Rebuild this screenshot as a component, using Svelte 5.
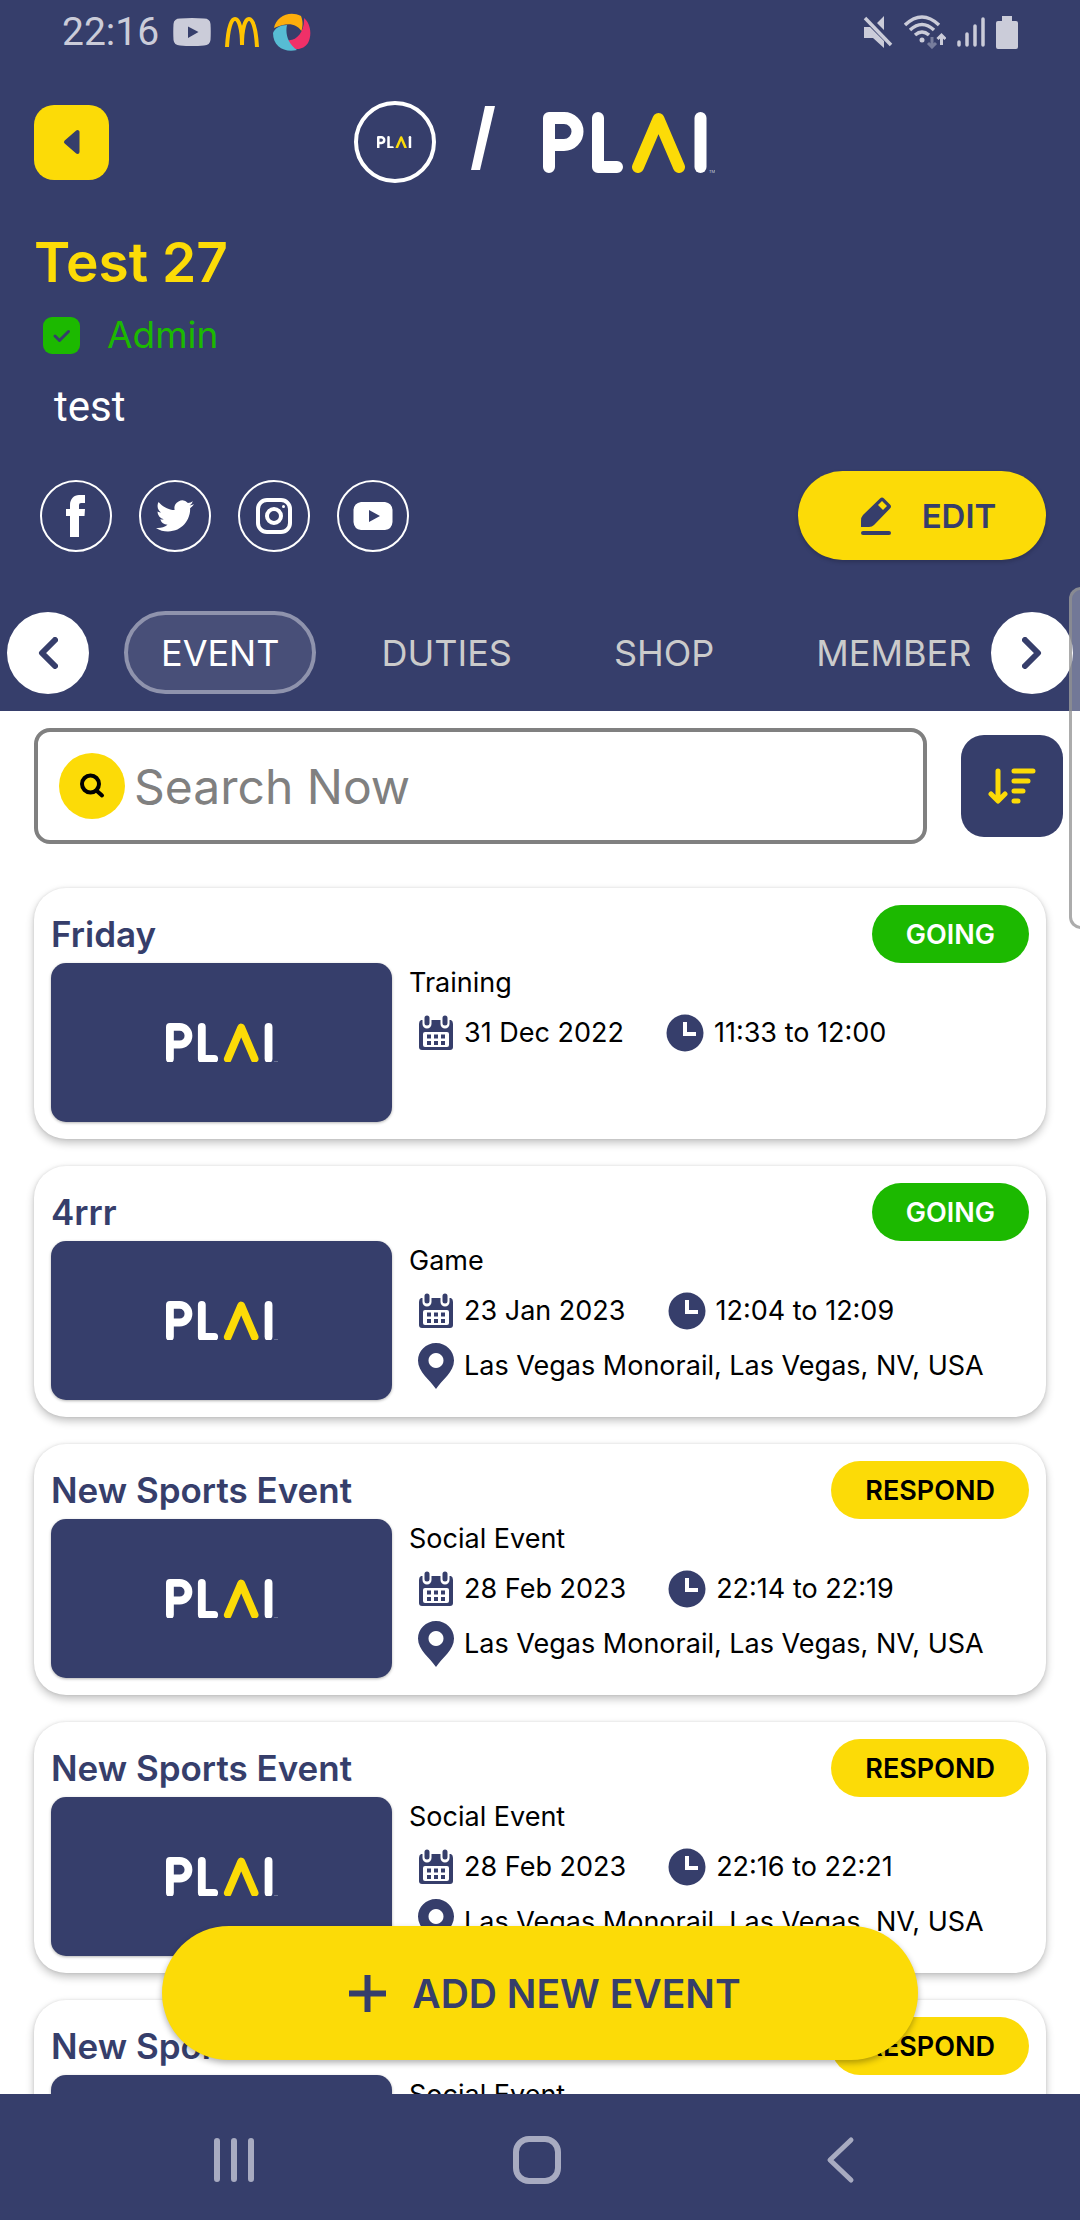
<script>
  const place = 'Las Vegas Monorail, Las Vegas, NV, USA';
  const events = [
    { title: 'Friday', kind: 'Training', date: '31 Dec 2022', time: '11:33 to 12:00', place: '', status: 'GOING' },
    { title: '4rrr', kind: 'Game', date: '23 Jan 2023', time: '12:04 to 12:09', place, status: 'GOING' },
    { title: 'New Sports Event', kind: 'Social Event', date: '28 Feb 2023', time: '22:14 to 22:19', place, status: 'RESPOND' },
    { title: 'New Sports Event', kind: 'Social Event', date: '28 Feb 2023', time: '22:16 to 22:21', place, status: 'RESPOND' },
    { title: 'New Sports Event', kind: 'Social Event', date: '28 Feb 2023', time: '22:16 to 22:21', place, status: 'RESPOND' }
  ];
  const tabs = ['EVENT', 'DUTIES', 'SHOP', 'MEMBERS'];
  let active = $state('EVENT');
  let query = $state('');
</script>

{#snippet logo()}
  <svg viewBox="0 0 172 61" role="img" aria-label="PLAI" fill="none" stroke="#fff" stroke-width="12" stroke-linecap="round" stroke-linejoin="round">
    <path d="M6 55V6H21a13.5 13.5 0 0 1 0 27H6" />
    <path d="M55 6V55H74" />
    <path d="M95 55 115.5 7 136 55" stroke="#fcdb07" />
    <path d="M157.500 6V55" />
    <text x="166" y="61" font-size="4" fill="#c9cbd9" stroke="none">TM</text>
  </svg>
{/snippet}

<div class="screen">
  <header>
    <div class="status">
      <div class="notices">
        <span class="clock">22:16</span>
        <svg width="38" height="28" viewBox="0 0 38 28"><path fill="#cbccd9" fill-rule="evenodd" d="M7 .5Q19-.5 31 .5Q37 .5 37.500 6Q38 14 37.500 22Q37 27 31 27.500Q19 28.500 7 27.500Q1 27 .5 22Q0 14 .5 6Q1 .5 7 .5ZM15 8.500V20L25.500 14Z" /></svg>
        <svg width="34" height="30" viewBox="0 0 34 30" fill="none" stroke="#ffc300" stroke-width="4"><path d="M2 30C3 12 6 2 10 2s7 10 7 26M17 28C17 12 20 2 24 2s7 10 8 28" /></svg>
        <svg width="38" height="38" viewBox="0 0 38 38">
          <path fill="#fdae0c" d="M1 15C3 3 17-3 28 3c2 5 2 10 .5 15C23 10 14 9 1 15Z" />
          <path fill="#f03068" d="M31 5c7 6 8 17 4 25-5 8-18 9-21-3 9 2 18-8 17-22Z" />
          <path fill="#57bcd4" d="M0 20c2-5 7-8 14-8-2 9 1 19 10 25C12 40 0 34 0 20Z" />
        </svg>
      </div>
      <div class="signals">
        <svg width="30" height="32" viewBox="0 0 30 32" fill="#cbccd9"><path d="M1 11H7L21 25V32L10 22H1ZM21 0V14L14 7Z" /><path d="M2 2 28 29" stroke="#cbccd9" stroke-width="3.500" /></svg>
        <svg width="42" height="34" viewBox="0 0 42 34" fill="none" stroke="#cbccd9" stroke-width="3.500">
          <path d="M1 10Q18-6 35 10M6 15Q18 4 30 15M11 20Q18 14 25 20" /><circle cx="18" cy="25" r="2.500" fill="#cbccd9" stroke="none" />
          <path d="M28 22V32M24 28 28 32 32 28" stroke="#777d9c" stroke-width="3" /><path d="M37.500 30V20M33.500 24 37.500 20 41.500 24" stroke-width="3" />
        </svg>
        <svg width="28" height="32" viewBox="0 0 28 32" fill="none" stroke="#cbccd9" stroke-width="3.500" stroke-linecap="round"><path d="M2 26V29M10 18V29M18 10V29M26 3V29" /></svg>
        <svg width="22" height="34" viewBox="0 0 22 34" fill="#cbccd9"><path d="M6 1H16V6H20Q22 6 22 8V32Q22 34 20 34H2Q0 34 0 32V8Q0 6 2 6H6Z" /></svg>
      </div>
    </div>

    <div class="topbar">
      <button class="back" aria-label="Back"><svg width="18" height="26" viewBox="0 0 18 26"><path d="M3 13 14.500 3V23Z" fill="#363e6b" stroke="#363e6b" stroke-width="4" stroke-linejoin="round" /></svg></button>
      <div class="brand">
        <span class="avatar">{@render logo()}</span>
        <svg class="slash" width="24" height="64" viewBox="0 0 24 64"><path d="M14 0H24L9 64H0Z" fill="#fff" /></svg>
        <span class="wordmark">{@render logo()}</span>
      </div>
    </div>

    <h1>Test 27</h1>
    <div class="role">
      <svg width="37" height="37" viewBox="0 0 37 37"><rect width="37" height="37" rx="9" fill="#1cb900" /><path d="m12 19 4.500 4.500 9-9" fill="none" stroke="#363e6b" stroke-width="3" stroke-linecap="round" stroke-linejoin="round" /></svg>
      <span>Admin</span>
    </div>
    <p class="about">test</p>

    <div class="actions">
      <a href="#facebook" aria-label="Facebook"><svg width="20" height="42" viewBox="0 0 20 42"><path fill="#fff" d="M4 42V21H0V14H4V10C4 4 8 0 13 0H19V8H15Q13 8 13 10V14H19L18.500 21H13V42Z" /></svg></a>
      <a href="#twitter" aria-label="Twitter"><svg width="38" height="38" viewBox="0 0 24 24"><path fill="#fff" d="M23.953 4.570a10 10 0 01-2.825.775 4.958 4.958 0 002.163-2.723c-.951.555-2.005.959-3.127 1.184a4.920 4.920 0 00-8.384 4.482C7.690 8.095 4.067 6.130 1.640 3.162a4.822 4.822 0 00-.666 2.475c0 1.710.870 3.213 2.188 4.096a4.904 4.904 0 01-2.228-.616v.060a4.923 4.923 0 003.946 4.827 4.996 4.996 0 01-2.212.085 4.936 4.936 0 004.604 3.417 9.867 9.867 0 01-6.102 2.105c-.390 0-.779-.023-1.170-.067a13.995 13.995 0 007.557 2.209c9.053 0 13.998-7.496 13.998-13.985 0-.210 0-.420-.015-.630A9.935 9.935 0 0024 4.590z" /></svg></a>
      <a href="#instagram" aria-label="Instagram"><svg width="36" height="36" viewBox="0 0 36 36" fill="none" stroke="#fff"><rect x="2" y="2" width="32" height="32" rx="9" stroke-width="4" /><circle cx="18" cy="18" r="7" stroke-width="4" /><circle cx="27.500" cy="8.500" r="1.500" fill="#fff" stroke="none" /></svg></a>
      <a href="#youtube" aria-label="YouTube"><svg width="40" height="28" viewBox="0 0 40 28"><path fill="#fff" fill-rule="evenodd" d="M8 0H32Q39 1 39.500 8V20Q39 27 32 28H8Q1 27 .5 20V8Q1 1 8 0ZM16 8V20L27 14Z" /></svg></a>
      <span class="grow"></span>
      <button class="edit">
        <svg width="32" height="38" viewBox="0 0 32 38" fill="#363e6b"><path fill-rule="evenodd" d="M20 1.500Q22-.5 24 1.500L30 7.500Q32 9.500 30 11.500L14 28Q12 30 9 30H1V24Q1 20 3 18ZM22 4 18 8 23 13 27 9Z" /><rect x="1" y="34" width="30" height="4" rx="2" /></svg>
        <span>EDIT</span>
      </button>
    </div>

    <nav class="tabs">
      <button class="round" aria-label="Previous tabs"><svg width="20" height="32" viewBox="0 0 20 32"><path d="M17 3 4 16 17 29" /></svg></button>
      <div class="track">
        {#each tabs as tab}
          <button class="tab" class:active={active === tab} onclick={() => (active = tab)}>{tab}</button>
        {/each}
      </div>
      <button class="round" aria-label="More tabs"><svg width="20" height="32" viewBox="0 0 20 32"><path d="M3 3 16 16 3 29" /></svg></button>
    </nav>
  </header>

  <main>
    <div class="searchrow">
      <label class="search">
        <span class="lens"><svg width="26" height="26" viewBox="0 0 26 26" fill="none" stroke="#000" stroke-width="4" stroke-linecap="round"><circle cx="11.500" cy="11" r="8.500" /><path d="m18 18 5 4.500" /></svg></span>
        <input type="text" placeholder="Search Now" aria-label="Search events" bind:value={query} />
      </label>
      <button class="sort" aria-label="Sort"><svg width="48" height="38" viewBox="0 0 48 38" fill="none" stroke="#fcdb07" stroke-width="5" stroke-linecap="round" stroke-linejoin="round"><path d="M10 4V33M3 27 10 34 17 27M26 4H45M26 14H40M26 24H35M26 34H30" /></svg></button>
    </div>

    <div class="list">
      {#each events as event}
        <article>
          <div class="cardhead">
            <h2>{event.title}</h2>
            <button class="badge" class:going={event.status === 'GOING'}>{event.status}</button>
          </div>
          <div class="cardbody">
            <div class="thumb">{@render logo()}</div>
            <div class="info">
              <p>{event.kind}</p>
              <div class="line">
                <svg width="36" height="36" viewBox="0 0 36 36">
                  <path fill="#363e6b" d="M3 5H33Q35 6 35 9V32Q35 35 32 35H4Q1 35 1 32V9Q1 6 3 5Z" />
                  <rect x="5" y="17" width="26" height="15" rx="2" fill="#fff" />
                  <path d="M9 1V9M27 1V9" stroke="#fff" stroke-width="9" stroke-linecap="round" />
                  <path d="M9 3V8M27 3V8" stroke="#363e6b" stroke-width="5" stroke-linecap="round" />
                  <path d="M9 21.500H27M9 28H27" stroke="#363e6b" stroke-width="4" stroke-dasharray="4 3" />
                </svg>
                <span>{event.date}</span>
                <svg class="time" width="38" height="38" viewBox="0 0 38 38"><circle cx="19" cy="19" r="18.500" fill="#363e6b" /><path d="M19 8V20H30" fill="none" stroke="#fff" stroke-width="4" /></svg>
                <span>{event.time}</span>
              </div>
              {#if event.place}
                <div class="line place">
                  <svg width="36" height="46" viewBox="0 0 36 46"><path fill="#363e6b" fill-rule="evenodd" d="M18 0C8 0 0 8 0 17.500 0 29 12 37 18 46 24 37 36 29 36 17.500 36 8 28 0 18 0ZM18 10a7.500 7.500 0 1 0 .010 0Z" /></svg>
                  <span>{event.place}</span>
                </div>
              {/if}
            </div>
          </div>
        </article>
      {/each}
    </div>
    <button class="add">
      <svg width="37" height="37" viewBox="0 0 37 37"><path d="M18.500 0V37M0 18.500H37" stroke="#363e6b" stroke-width="6" /></svg>
      <span>ADD NEW EVENT</span>
    </button>
  </main>

  <footer>
    <button aria-label="Recent apps"><svg width="48" height="48" viewBox="0 0 48 48"><path d="M7 5V43M24 5V43M41 5V43" stroke-width="6" /></svg></button>
    <button aria-label="Home"><svg width="48" height="48" viewBox="0 0 48 48"><rect x="3" y="3" width="42" height="42" rx="13" stroke-width="6" /></svg></button>
    <button aria-label="Back"><svg width="48" height="48" viewBox="0 0 48 48"><path d="M35 4 14 24 35 44" stroke-width="5" /></svg></button>
  </footer>
  <div class="edge"></div>
</div>

<style>
  :global(body) { margin: 0; }
  .screen {
    position: relative;
    display: flex;
    flex-direction: column;
    height: 100vh;
    overflow: hidden;
    background: #fff;
    color: #000;
    font-family: Inter, "Open Sans", sans-serif;
  }
  svg { display: block; flex: none; }
  button { border: 0; padding: 0; font: inherit; color: inherit; background: none; cursor: pointer; flex: none; }
  h1, h2, p { margin: 0; }
  .grow { flex: 1; }

  header { background: #363e6b; padding-bottom: 17px; flex: none; }
  .status { display: flex; align-items: center; justify-content: space-between; height: 64px; padding: 0 62px; }
  .notices { display: flex; align-items: center; gap: 14px; }
  .signals { display: flex; align-items: center; gap: 11px; }
  .clock { font-family: Roboto, sans-serif; font-size: 39px; line-height: 48px; color: #cbccd9; }
  .topbar { display: grid; grid-template-columns: 75px 1fr 75px; align-items: center; padding: 37px 34px 0; }
  .back { display: grid; place-items: center; width: 75px; height: 75px; border-radius: 20px; background: #fcdb07; }
  .brand { display: flex; align-items: center; justify-content: center; padding-right: 12px; }
  .avatar { display: grid; place-items: center; box-sizing: border-box; width: 82px; height: 82px; border: 4px solid #fff; border-radius: 50%; }
  .avatar :global(svg) { width: 36px; }
  .slash { margin: 0 48px 8px 35px; }
  .wordmark { width: 172px; }

  h1 { margin: 47px 34px 0; font-size: 55px; line-height: 64px; font-weight: 600; color: #fcdb07; }
  .role { display: flex; align-items: center; gap: 27px; margin: 20px 43px 0; font-size: 37px; line-height: 42px; color: #1cb900; }
  .about { margin: 27px 54px 0; font-family: Roboto, sans-serif; font-size: 42px; line-height: 48px; color: #fff; }

  .actions { display: flex; align-items: center; gap: 27px; margin: 40px 34px 0 40px; }
  .actions a { display: grid; place-items: center; box-sizing: border-box; width: 72px; height: 72px; border: 2px solid #fff; border-radius: 50%; }
  .actions .grow { margin-left: -27px; }
  .edit { display: flex; align-items: center; justify-content: center; gap: 30px; width: 248px; height: 89px; border-radius: 45px; background: #fcdb07; color: #363e6b; font-size: 33px; font-weight: 600; box-shadow: 0 2px 4px rgba(0, 0, 0, .2); padding-left: 12px; box-sizing: border-box; }

  .tabs { display: flex; align-items: center; margin-top: 51px; padding: 0 7px; }
  .round { display: grid; place-items: center; width: 82px; height: 82px; border-radius: 50%; background: #fff; }
  .round path { fill: none; stroke: #363e6b; stroke-width: 6; stroke-linecap: round; stroke-linejoin: round; }
  .track { display: flex; gap: 28px; flex: 1; min-width: 0; overflow: hidden; margin: 0 21px 0 35px; }
  .tab { box-sizing: border-box; height: 83px; padding: 0 33px; border: 4px solid transparent; border-radius: 42px; font-size: 36px; color: #cbcbcb; }
  .tab.active { color: #fff; border-color: #8f93ad; background: #484f78; }

  main { position: relative; display: flex; flex-direction: column; flex: 1; min-height: 0; overflow: hidden; }
  .searchrow { display: flex; align-items: center; gap: 34px; padding: 17px 17px 44px 34px; }
  .search { display: flex; align-items: center; gap: 9px; flex: 1; min-width: 0; box-sizing: border-box; height: 116px; padding: 0 21px; border: 4px solid #808080; border-radius: 16px; }
  .lens { display: grid; place-items: center; flex: none; width: 66px; height: 66px; border-radius: 50%; background: #fcdb07; }
  input { flex: 1; min-width: 0; border: 0; padding: 0; outline: 0; background: none; font: inherit; font-size: 48px; }
  input::placeholder { color: #808080; opacity: 1; }
  .sort { display: grid; place-items: center; width: 102px; height: 102px; border-radius: 23px; background: #363e6b; }

  .list { display: flex; flex-direction: column; gap: 27px; padding: 0 34px; }
  article { flex: none; box-sizing: border-box; padding: 17px; border-radius: 32px; background: #fff; box-shadow: 0 4px 8px rgba(0, 0, 0, .24), 0 0 3px rgba(0, 0, 0, .1); }
  .cardhead { display: flex; align-items: center; justify-content: space-between; }
  h2 { font-size: 35px; line-height: 58px; font-weight: 600; color: #363e6b; }
  .badge { height: 58px; padding: 0 34px; border-radius: 29px; background: #fcdb07; color: #000; font-size: 27px; font-weight: 600; }
  .badge.going { background: #1cb900; color: #fff; }
  .cardbody { display: flex; gap: 17px; }
  .thumb { display: grid; place-items: center; flex: none; width: 341px; height: 159px; border-radius: 15px; background: #363e6b; box-shadow: 0 1px 3px rgba(0, 0, 0, .3); }
  .thumb :global(svg) { width: 112px; }
  .info { min-width: 0; font-size: 27px; line-height: 40px; }
  .line { display: flex; align-items: center; gap: 10px; height: 38px; margin: 11px 0 0 9px; white-space: nowrap; }
  .line.place { height: 46px; margin-top: 13px; }
  .time { margin-left: 32px; }

  .add { position: absolute; left: 15%; right: 15%; bottom: 34px; display: flex; align-items: center; justify-content: center; gap: 26px; height: 134px; padding-left: 10px; border-radius: 67px; background: #fcdb07; color: #363e6b; font-size: 39px; font-weight: 600; box-shadow: 0 3px 6px rgba(0, 0, 0, .3); }

  footer { display: flex; align-items: center; justify-content: space-between; flex: none; box-sizing: border-box; height: 126px; padding: 6px 216px 0 210px; background: #363e6b; }
  footer svg { fill: none; stroke: #a8abc1; stroke-linecap: round; stroke-linejoin: round; }

  .edge { position: absolute; right: -4px; top: 587px; box-sizing: border-box; width: 15px; height: 342px; border: 3px solid rgba(144, 144, 144, .75); border-radius: 12px 0 0 12px; background: rgba(255, 255, 255, .3); }
</style>
